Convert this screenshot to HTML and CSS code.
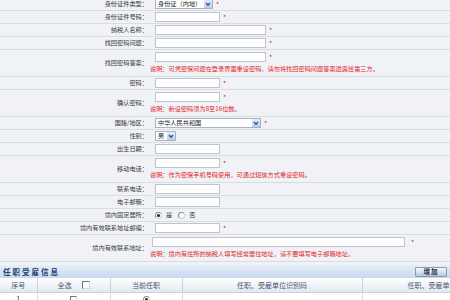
FILE: index.html
```html
<!DOCTYPE html>
<html lang="zh-CN">
<head>
<meta charset="utf-8">
<title>纳税人信息</title>
<link rel="stylesheet" href="styles.css">
</head>
<body>
<div class="page">
  <div class="form">
    <div class="row">
      <div class="label">身份证件类型：</div>
      <div class="field"><div class="line">
        <span class="select w-id"><span class="sel-val">身份证（内地）</span><span class="arrow"><svg viewBox="0 0 8 8" width="8" height="8"><polyline points="2,3 4,5.2 6,3" fill="none" stroke="#2f5597" stroke-width="1.4"/></svg></span></span><span class="req">*</span>
      </div></div>
    </div>
    <div class="row">
      <div class="label">身份证件号码：</div>
      <div class="field"><div class="line"><span class="input w-s"></span><span class="req">*</span></div></div>
    </div>
    <div class="row">
      <div class="label">纳税人名称：</div>
      <div class="field"><div class="line"><span class="input w-m"></span><span class="req">*</span></div></div>
    </div>
    <div class="row">
      <div class="label">找回密码问题：</div>
      <div class="field"><div class="line"><span class="input w-m"></span><span class="req">*</span></div></div>
    </div>
    <div class="row tall">
      <div class="label">找回密码答案：</div>
      <div class="field"><div class="line"><span class="input w-m"></span><span class="req">*</span></div>
        <div class="note">说明：可凭密保问题在登录界面重设密码，请勿将找回密码问题答案透露给第三方。</div></div>
    </div>
    <div class="row">
      <div class="label">密码：</div>
      <div class="field"><div class="line"><span class="input w-s"></span><span class="req">*</span></div></div>
    </div>
    <div class="row tall">
      <div class="label">确认密码：</div>
      <div class="field"><div class="line"><span class="input w-s"></span><span class="req">*</span></div>
        <div class="note">说明：新设密码须为8至16位数。</div></div>
    </div>
    <div class="row">
      <div class="label">国籍/地区：</div>
      <div class="field"><div class="line">
        <span class="select w-country"><span class="sel-val">中华人民共和国</span><span class="arrow"><svg viewBox="0 0 8 8" width="8" height="8"><polyline points="2,3 4,5.2 6,3" fill="none" stroke="#2f5597" stroke-width="1.4"/></svg></span></span><span class="req">*</span>
      </div></div>
    </div>
    <div class="row">
      <div class="label">性别：</div>
      <div class="field"><div class="line">
        <span class="select w-sex"><span class="sel-val">男</span><span class="arrow"><svg viewBox="0 0 8 8" width="8" height="8"><polyline points="2,3 4,5.2 6,3" fill="none" stroke="#2f5597" stroke-width="1.4"/></svg></span></span>
      </div></div>
    </div>
    <div class="row">
      <div class="label">出生日期：</div>
      <div class="field"><div class="line"><span class="input w-s"></span></div></div>
    </div>
    <div class="row tall">
      <div class="label">移动电话：</div>
      <div class="field"><div class="line"><span class="input w-s"></span><span class="req">*</span></div>
        <div class="note">说明：作为密保手机号码使用，可通过短信方式重设密码。</div></div>
    </div>
    <div class="row">
      <div class="label">联系电话：</div>
      <div class="field"><div class="line"><span class="input w-s"></span></div></div>
    </div>
    <div class="row">
      <div class="label">电子邮箱：</div>
      <div class="field"><div class="line"><span class="input w-s"></span></div></div>
    </div>
    <div class="row">
      <div class="label">境内固定居所：</div>
      <div class="field"><div class="line">
        <span class="radio on"></span><span class="opt">是</span>
        <span class="radio"></span><span class="opt">否</span>
      </div></div>
    </div>
    <div class="row">
      <div class="label">境内有效联系地址邮编：</div>
      <div class="field"><div class="line"><span class="input w-s"></span><span class="req">*</span></div></div>
    </div>
    <div class="row tall">
      <div class="label">境内有效联系地址：</div>
      <div class="field"><div class="line addr"><span class="input w-l"></span><span class="req wide">*</span></div>
        <div class="note">说明：境内有住所的纳税人填写经常居住地址，请不要填写电子邮箱地址。</div></div>
    </div>
  </div>

  <div class="section">
    <span class="title">任职受雇信息</span>
    <button class="btn" type="button">增加</button>
  </div>

  <div class="grid-wrap">
    <table class="grid">
      <colgroup>
        <col class="c1"><col class="c2"><col class="c3"><col class="c4"><col class="c5">
      </colgroup>
      <thead>
        <tr>
          <th>序号</th>
          <th><span class="th-all">全选<span class="check big"></span></span></th>
          <th>当前任职</th>
          <th>任职、受雇单位识别码</th>
          <th>任职、受雇单位名称</th>
        </tr>
      </thead>
      <tbody>
        <tr>
          <td>1</td>
          <td><span class="check"></span></td>
          <td><span class="radio on"></span></td>
          <td></td>
          <td></td>
        </tr>
      </tbody>
    </table>
  </div>
</div>
</body>
</html>
```

FILE: styles.css
```css
html, body {
  margin: 0;
  padding: 0;
  overflow: hidden;
}
body {
  width: 450px;
  height: 300px;
  background: #f0f2f6;
  font-family: "Noto Sans CJK SC", "Noto Sans", sans-serif;
  color: #333;
}
.page {
  margin-top: -2px;
}
.row {
  display: flex;
  height: 12px;
  border-bottom: 1px solid #d8dce4;
}
.row.tall {
  height: 26px;
}
.label {
  width: 150px;
  flex: none;
  box-sizing: border-box;
  padding-right: 2px;
  display: flex;
  align-items: center;
  justify-content: flex-end;
  font-size: 6.2px;
  line-height: 1;
  white-space: nowrap;
  color: #3a3a3a;
}
.field {
  flex: 1;
  display: flex;
  flex-direction: column;
  justify-content: center;
}
.row.tall .field {
  justify-content: flex-start;
  padding-top: 2px;
}
.line {
  display: flex;
  align-items: center;
  height: 10px;
  padding-left: 5px;
}
.line.addr {
  padding-left: 2px;
}
.input {
  box-sizing: border-box;
  height: 10px;
  border: 1px solid #bcc4d0;
  background: #fff;
}
.w-s { width: 65px; }
.w-m { width: 111px; }
.w-l { width: 253px; }
.req {
  color: #e0262b;
  font-size: 7px;
  line-height: 1;
  margin-left: 3px;
}
.req.wide {
  margin-left: 6px;
}
.note {
  color: #e0262b;
  font-size: 6.2px;
  line-height: 8px;
  margin-top: 3px;
  white-space: nowrap;
}
.select {
  display: flex;
  align-items: center;
  box-sizing: border-box;
  height: 10px;
  border: 1px solid #a8b3c3;
  background: #fff;
  font-size: 6.2px;
  line-height: 1;
  color: #222;
}
.w-id { width: 58px; }
.w-country { width: 106px; }
.w-sex { width: 21px; }
.sel-val {
  flex: 1;
  padding-left: 2px;
  white-space: nowrap;
}
.arrow {
  width: 8px;
  height: 100%;
  display: flex;
  align-items: center;
  justify-content: center;
  background: linear-gradient(#e4ecf8, #b8cbe8);
}
.radio {
  box-sizing: border-box;
  width: 7px;
  height: 7px;
  border-radius: 50%;
  border: 1px solid #808a99;
  border-right-color: #cfd4dc;
  border-bottom-color: #cfd4dc;
  background: #fff;
  display: inline-flex;
  align-items: center;
  justify-content: center;
  vertical-align: middle;
}
.radio.on::after {
  content: "";
  width: 3px;
  height: 3px;
  border-radius: 50%;
  background: #222;
}
.opt {
  font-size: 6.2px;
  line-height: 1;
  margin: 0 6px 0 4px;
  color: #333;
}
.section {
  margin-top: 3px;
  height: 13px;
  display: flex;
  align-items: center;
  justify-content: space-between;
  padding: 0 3px;
  background: linear-gradient(#e6eef8, #c8d9ee);
}
.title {
  font-size: 7.5px;
  font-weight: bold;
  letter-spacing: 2px;
  color: #25416f;
  line-height: 1;
}
.btn {
  width: 32px;
  height: 10px;
  padding: 0;
  border: 1px solid #8a9bb3;
  border-radius: 1px;
  background: linear-gradient(#f6f8fb, #b9c8db);
  font-family: "Noto Sans CJK SC", sans-serif;
  font-size: 6.5px;
  font-weight: bold;
  letter-spacing: 1px;
  color: #1d2f4a;
  line-height: 1;
}
.grid-wrap {
  width: 450px;
  overflow: hidden;
}
.grid {
  width: 516px;
  border-collapse: collapse;
  table-layout: fixed;
}
.c1 { width: 37px; }
.c2 { width: 73px; }
.c3 { width: 72px; }
.c4 { width: 180px; }
.c5 { width: 154px; }
.grid th {
  height: 14px;
  padding: 0;
  border-right: 1px solid #c9d1dc;
  border-bottom: 1px solid #c9d1dc;
  background: linear-gradient(#ffffff, #e2e8f0);
  font-weight: normal;
  font-size: 7px;
  line-height: 1;
  color: #4b5870;
  white-space: nowrap;
  overflow: hidden;
}
.th-all {
  display: inline-flex;
  align-items: center;
  gap: 10px;
}
.grid td {
  height: 12px;
  padding: 0;
  background: #fff;
  border-right: 1px solid #d5dbe4;
  text-align: center;
  font-size: 7px;
  line-height: 1;
  color: #333;
  vertical-align: middle;
}
.check {
  display: inline-block;
  box-sizing: border-box;
  width: 7px;
  height: 7px;
  border: 1px solid #6f7886;
  border-right-color: #d6dae0;
  border-bottom-color: #d6dae0;
  background: #fff;
  vertical-align: middle;
}
.check.big {
  width: 8px;
  height: 8px;
}
```
